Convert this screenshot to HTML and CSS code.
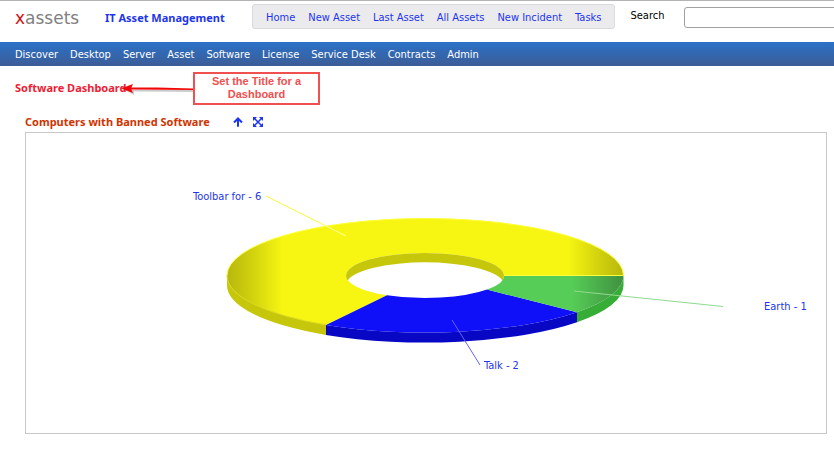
FILE: index.html
```html
<!DOCTYPE html>
<html lang="en">
<head>
<meta charset="utf-8">
<title>Software Dashboard</title>
<link rel="stylesheet" href="styles.css">
</head>
<body>
<header class="top">
  <a class="logo" href="#"><span class="logo-x">x</span>assets</a>
  <strong class="product">IT Asset Management</strong>
  <nav class="shortcuts" aria-label="Shortcuts">
    <a href="#">Home</a>
    <a href="#">New Asset</a>
    <a href="#">Last Asset</a>
    <a href="#">All Assets</a>
    <a href="#">New Incident</a>
    <a href="#">Tasks</a>
  </nav>
  <label class="search-label" for="search">Search</label>
  <input class="search" id="search" type="text">
</header>
<nav class="menu" aria-label="Main">
  <a href="#">Discover</a>
  <a href="#">Desktop</a>
  <a href="#">Server</a>
  <a href="#">Asset</a>
  <a href="#">Software</a>
  <a href="#">License</a>
  <a href="#">Service Desk</a>
  <a href="#">Contracts</a>
  <a href="#">Admin</a>
</nav>
<main>
  <div class="title-row">
    <h1>Software Dashboard</h1>
    <div class="callout">
      <svg class="arrow" width="72" height="16" viewBox="0 0 72 16" aria-hidden="true">
        <path d="M4 9 L13 14 L13 10.500 L72 11 L72 9 Z" fill="#000" opacity=".2"/>
        <path d="M8 6.500 H36 L72 7.500 V9 L8 8.500 Z" fill="#f00808"/>
        <path d="M0 7.500 L12 3 L10 7.500 L12 12 Z" fill="#f00808"/>
      </svg>
      <p class="note">Set the Title for a Dashboard</p>
    </div>
  </div>
  <section class="widget">
    <div class="widget-head">
      <h2>Computers with Banned Software</h2>
      <button type="button" aria-label="Move up">
        <svg width="10" height="10" viewBox="0 0 10 10"><path d="M5 9.800 V1.500 M1 5.500 L5 1.500 L9 5.500" fill="none" stroke="#1d35ee" stroke-width="2"/></svg>
      </button>
      <button type="button" aria-label="Expand">
        <svg width="10" height="10" viewBox="0 0 10 10"><path d="M0 0 H4 L0 4 Z M10 0 V4 L6 0 Z M0 10 V6 L4 10 Z M10 10 H6 L10 6 Z" fill="#1d35ee"/><path d="M1.500 1.500 L8.500 8.500 M8.500 1.500 L1.500 8.500" stroke="#1d35ee" stroke-width="1.500"/></svg>
      </button>
    </div>
    <div class="panel">
      <svg class="chart" viewBox="26 133 800 300" role="img" aria-label="Computers with banned software">
        <defs>
          <linearGradient id="yellow" gradientUnits="userSpaceOnUse" x1="227" y1="0" x2="624" y2="0">
            <stop offset="0" stop-color="#b7b70e"/><stop offset=".06" stop-color="#d0d00e"/><stop offset=".14" stop-color="#f6f612"/>
            <stop offset=".86" stop-color="#f6f612"/><stop offset=".94" stop-color="#d0d00e"/><stop offset="1" stop-color="#b7b70e"/>
          </linearGradient>
          <linearGradient id="green" gradientUnits="userSpaceOnUse" x1="572" y1="0" x2="624" y2="0">
            <stop offset="0" stop-color="#56cd56"/><stop offset="1" stop-color="#3f903f"/>
          </linearGradient>
        </defs>
        <path d="M227 275.500 A198.250 57 0 0 0 326 324.900 V334.900 A198.250 57 0 0 1 227 285.500 Z" fill="#c6c60a"/>
        <path d="M326 324.900 A198.250 57 0 0 0 577 312.200 V322.200 A198.250 57 0 0 1 326 334.900 Z" fill="#0707c4"/>
        <path d="M577 312.200 A198.250 57 0 0 0 623.500 275.500 V285.500 A198.250 57 0 0 1 577 322.200 Z" fill="#36ad36"/>
        <path d="M504 275.500 H623.500 A198.250 57 0 0 0 227 275.500 A198.250 57 0 0 0 326 324.900 L387 295.200 A79 22.500 0 0 1 346 275.500 A79 22.500 0 0 1 504 275.500 Z" fill="url(#yellow)"/>
        <path d="M326 324.900 A198.250 57 0 0 0 577 312.200 L487 289.600 A79 22.500 0 0 1 387 295.200 Z" fill="#1010f8"/>
        <path d="M577 312.200 A198.250 57 0 0 0 623.500 275.500 H504 A79 22.500 0 0 1 487 289.600 Z" fill="url(#green)"/>
        <path d="M347.500 280.500 Q346 278 346 275.500 A79 22.500 0 0 1 504 275.500 Q504 278 502.500 280.500 A79 22.500 0 0 0 347.500 280.500 Z" fill="#c6c60a"/>
        <path d="M227 275.500 A198.250 57 0 0 1 623.500 275.500 H504" fill="none" stroke="#ffff3c"/>
        <path d="M227 275.500 A198.250 57 0 0 0 326 324.900" fill="none" stroke="#d9d91c"/>
        <path d="M266 196 L346 236" stroke="#f8f83c"/>
        <path d="M318 222 L346 236" stroke="#ffff90"/>
        <path d="M574 291 L723 306.500" stroke="#8edb8e"/>
        <path d="M452 320 L480 365" stroke="#6464f4"/>
        <text x="193" y="200">Toolbar for - 6</text>
        <text x="484" y="369">Talk - 2</text>
        <text x="764" y="310">Earth - 1</text>
      </svg>
    </div>
  </section>
</main>
</body>
</html>
```
FILE: styles.css
```css
* { box-sizing: border-box; }
body {
  margin: 0;
  overflow-x: hidden;
  background: #fff;
  color: #000;
  font: 11px/16px "DejaVu Sans Condensed", "Noto Sans", sans-serif;
}
a { color: inherit; text-decoration: none; }
.top {
  display: flex;
  align-items: flex-start;
  height: 42px;
  padding: 3px 0 0 15px;
  border-top: 1px solid #b4b2b4;
}
.logo {
  width: 90px;
  font: 17px/28px "DejaVu Sans", sans-serif;
  color: #808080;
}
.logo-x { color: #d01418; }
.product {
  width: 147px;
  font-family: "Noto Sans", sans-serif;
  line-height: 28px;
  color: #1d35ee;
}
.shortcuts {
  display: flex;
  gap: 13px;
  padding: 5px 13px 2px;
  border: 1px solid #dadadc;
  border-radius: 3px;
  background: #ebebee;
  color: #1d35ee;
  white-space: nowrap;
}
.search-label { margin: 4px 20px 0 15px; }
.search {
  flex: 1;
  min-width: 0;
  height: 21px;
  margin: 3px -4px 0 0;
  border: 1px solid #a0a0a0;
  border-radius: 3px;
  background: #fff;
  font: inherit;
}
.menu {
  display: flex;
  gap: 12px;
  padding: 5px 15px 3px;
  background: linear-gradient(#2a72c8, #3c5c96);
  color: #fff;
  white-space: nowrap;
}
h1, h2, p { margin: 0; font-size: 11px; }
h1, h2 { font-family: "Noto Sans", sans-serif; }
.title-row {
  display: flex;
  padding: 6px 15px 0;
}
h1 {
  width: 106px;
  line-height: 32px;
  color: #ee1c34;
  white-space: nowrap;
}
.callout { display: flex; align-items: center; }
.arrow { position: relative; z-index: 1; }
.note {
  width: 127px;
  padding: 1px 12px 2px;
  border: 2px solid #f05050;
  font: bold 11px/13px "Liberation Sans", sans-serif;
  color: #f05050;
  text-align: center;
}
.widget { padding: 6px 7px 0 25px; }
.widget-head {
  display: flex;
  align-items: center;
  gap: 10px;
  height: 21px;
}
h2 { width: 198px; color: #d03400; white-space: nowrap; }
button {
  display: flex;
  padding: 0;
  border: 0;
  background: none;
}
.panel { border: 1px solid #c8c8c8; }
.chart { display: block; width: 100%; }
.chart text { fill: #1d35ee; font-size: 11px; }
```
